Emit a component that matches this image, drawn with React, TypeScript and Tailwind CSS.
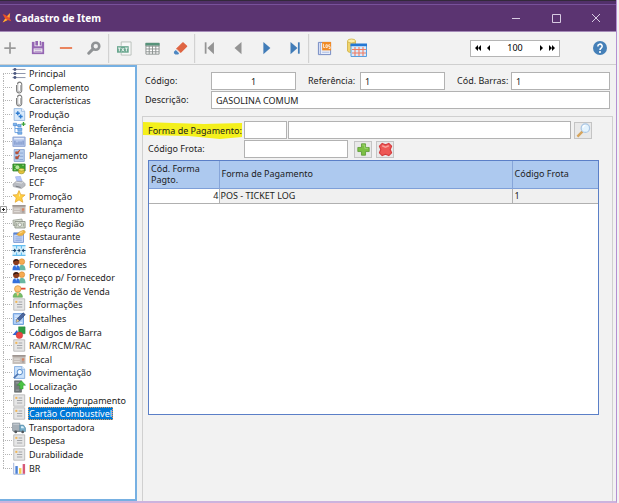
import type { ReactNode } from "react";

const Svg = ({ children, className = "h-4 w-4" }: { children: ReactNode; className?: string }) => (
  <svg viewBox="0 0 16 16" fill="none" className={className} aria-hidden="true">
    {children}
  </svg>
);

/* ---------- tree icons ---------- */

const ListIcon = (
  <Svg>
    <path d="M0 3h16M0 8h16M0 13h16" stroke="#8c93aa" strokeWidth="1.2" />
    <circle cx="3" cy="3" r="1.8" fill="#4c5880" />
    <circle cx="3" cy="8" r="1.8" fill="#4c5880" />
    <circle cx="3" cy="13" r="1.8" fill="#4c5880" />
  </Svg>
);
const ClipIcon = (
  <Svg>
    <path d="M5 5v6.5a3.2 3.2 0 0 0 6.400 0V4a2.600 2.600 0 0 0-5.200 0" stroke="#7c7c7c" strokeWidth="1.3" />
    <path d="M6.500 4v7.300a1.700 1.700 0 0 0 3.400 0V5" stroke="#a0a0a0" strokeWidth="1" />
  </Svg>
);
const ProductionIcon = (
  <Svg>
    <path d="M2 .7h9.5L15 4v11.3H2z" fill="#d9eafb" stroke="#8fb2dc" />
    <path d="M11 .7V4h4" fill="#fff" stroke="#8fb2dc" />
    <path d="M6.500 4v5M4 6.500h5M10 8v5M7.500 10.500h5" stroke="#2f7cd0" strokeWidth="1.8" />
  </Svg>
);
const ReferenceIcon = (
  <Svg>
    <path d="M3 3v10M3 8h5M3 13h5M3 4h5" stroke="#5b96dc" strokeWidth="1" />
    <path d="M1 1.500h4v3H1zM6.500 3h4v3h-4zM6.500 7.500h5v3h-5zM6.500 12h5v3h-5z" fill="#7fb5ef" stroke="#3f80ca" strokeWidth=".7" />
    <path d="M13.500 0v5M11 2.500h5" stroke="#36a136" strokeWidth="1.6" />
  </Svg>
);
const ScaleIcon = (
  <Svg>
    <path d="M.5 2.500h15v11.500H.5z" fill="#b6c8ec" stroke="#8199cb" />
    <path d="M2 4.500h12" stroke="#e6edfa" strokeWidth="1.500" />
    <path d="M3 7v5M5.500 9v3M8 8v4M10.500 8v4M13 7v5" stroke="#6f89c0" strokeWidth="1.200" />
  </Svg>
);
const PlanIcon = (
  <Svg>
    <path d="M2 .7h12.500v14.600H2z" fill="#b9cfee" stroke="#7f9bcb" />
    <path d="M8.500 5H13M8.500 9H13M8.500 13H13" stroke="#8ba7d3" strokeWidth="1.200" />
    <path d="M3.500 3h4v3.500h-4zM3.500 9h4v3.500h-4z" fill="#845c62" />
    <path d="m4 3.500 1.500 2L9 1.500M4 9.500l1.500 2 3-4" stroke="#c9502f" strokeWidth="1.400" />
  </Svg>
);
const MoneyIcon = (
  <Svg>
    <path d="M.5 2.500h15v8.500H.5z" fill="#3da22f" stroke="#2c7d24" />
    <circle cx="6" cy="6.500" r="2.400" fill="#b8e6a0" />
    <path d="M2 4h2M12 4h2M2 9.500h2" stroke="#b8e6a0" />
    <path d="M7.500 9.500v3.500c1 2 6 2 7 0V9.500c-1 1.400-6 1.400-7 0" fill="#e5c33b" stroke="#8c8a1c" strokeWidth=".7" />
    <ellipse cx="11" cy="9.500" rx="3.500" ry="1.500" fill="#f5e673" stroke="#8c8a1c" strokeWidth=".6" />
  </Svg>
);
const PrinterIcon = (
  <Svg>
    <path d="m3.500 1 6-1 3 8H6z" fill="#b4c6fa" stroke="#97a9e2" strokeWidth=".6" />
    <path d="m.5 10 4-3.500h8l3 3v2.500L11 15.500 1 13z" fill="#b9bcc2" stroke="#94979d" strokeWidth=".7" />
    <path d="m4 7.500 7 1.200L13 7" stroke="#e2e4e8" strokeWidth="1.200" />
    <path d="m4 12.500 6 1.500" stroke="#696c73" />
  </Svg>
);
const StarIcon = (
  <Svg>
    <path d="m8 .7 2.200 5 5.300.4-4.100 3.500 1.300 5.500L8 12.200l-4.700 2.900 1.300-5.500L.5 6.100l5.300-.4z" fill="#ffcf42" stroke="#e3a52d" strokeWidth=".9" />
    <path d="m8 3 1.200 3.600L8 9z" fill="#fff0b0" />
  </Svg>
);
const CardIcon = (
  <Svg>
    <path d="M0 2.500h16v11H0z" fill="#c5beb9" />
    <path d="M0 2.500h16v2H0z" fill="#9d9490" />
    <path d="M2 7.500h7M2 10.500h7" stroke="#dedad6" strokeWidth="1.400" />
    <path d="M11.500 6.500h3v3h-3z" fill="#d38364" />
    <path d="M11.500 11h3" stroke="#8e837e" />
  </Svg>
);
const NotesIcon = (
  <Svg>
    <path d="m.6 4 11-1.500 1 7-11.500 1z" fill="#dbe0d5" stroke="#959b8f" />
    <path d="M3 5.500h12.500v8H3z" fill="#d4dacd" stroke="#868c80" />
    <circle cx="9" cy="9.500" r="2.200" fill="#f5f6f2" stroke="#8a9084" strokeWidth=".8" />
    <path d="M5 7.500v4M13.500 7.500v4" stroke="#9aa094" />
  </Svg>
);
const RestaurantIcon = (
  <Svg>
    <path d="M1.500 3.500h12v11.800h-12z" fill="#c8d9f8" stroke="#6a8bcb" />
    <path d="M1.500 3.500h12v2.200h-12z" fill="#5983d2" />
    <path d="M3.500 8.500h8M3.500 11h8M3.500 13.200h8" stroke="#7c9ad6" />
    <path d="M5 5.500 9 2l5-2 2 2.500-3.500 4-4.500.5z" fill="#f0b542" stroke="#cf9330" strokeWidth=".6" />
    <path d="m8.500 4 4-2" stroke="#ffe9a6" />
  </Svg>
);
const TransferIcon = (
  <Svg>
    <path d="M0 2h16v12H0z" fill="#d3effd" />
    <path d="M0 2h16M0 14h16M5 2v3.500M11 2v3.500M5 10.500V14M11 10.500V14" stroke="#64bdf0" strokeWidth="1.400" />
    <path d="M0 8h3M13 8h3M6 8h2" stroke="#1c466f" strokeWidth="1.300" />
    <path d="m2 5.500 3 2.500-3 2.500zM14 5.500 11 8l3 2.500zM7.500 5.500l2.500 2.500-2.500 2.500z" fill="#1c466f" />
  </Svg>
);
const PeopleIcon = (
  <Svg>
    <circle cx="11.500" cy="4.500" r="3.500" fill="#f6aa50" stroke="#d0812d" strokeWidth=".7" />
    <path d="M8 15c0-5 1-6.500 3.500-6.500S16 10 16 15z" fill="#69b7a2" />
    <circle cx="4.500" cy="5" r="3.800" fill="#8c3c1c" />
    <path d="M.800 5a3.700 3.700 0 0 1 7.200-1L5 3z" fill="#2d1a14" />
    <path d="M0 15c0-4.500 1.500-6 4.500-6S9 10.500 9 15z" fill="#3470dc" />
    <path d="m3.500 9 1 3 1-3z" fill="#fff" />
  </Svg>
);
const RestrictIcon = (
  <Svg>
    <circle cx="6.500" cy="4.800" r="4" fill="#ffc577" stroke="#d6923d" strokeWidth=".9" />
    <path d="M.8 15c0-4 2-5.500 5.700-5.500s5.700 1.500 5.700 5.500z" fill="#79bf68" stroke="#559b49" strokeWidth=".7" />
    <path d="m4.500 9.500 2 4.500 2-4.500z" fill="#ffcb85" />
    <path d="M10.500 4.500H16" stroke="#e24a33" strokeWidth="2.200" />
  </Svg>
);
const FormIcon = (
  <Svg>
    <path d="M1.500 1h13.500v14H1.500z" fill="#e6e6e6" stroke="#b3b3b3" />
    <path d="M3.500 3.500h2.500v2.500H3.500z" fill="#f0b658" />
    <path d="M7.500 5H12M5.500 8H12M5.500 11H12" stroke="#a3a6aa" strokeWidth="1.300" />
  </Svg>
);
const PencilPageIcon = (
  <Svg>
    <path d="M1 2h12.500v13.300H1z" fill="#b3d1f8" stroke="#558cd4" />
    <path d="M3 5h5M3 8h3M9 13h3" stroke="#e8f2fe" strokeWidth="1.200" />
    <path d="m4.500 12.500 1-4L13 1l2.700 2.200L8.500 11z" fill="#4b67a0" stroke="#2e4470" strokeWidth=".8" />
    <path d="m4.500 12.500 1-4 3 2.500z" fill="#f3d190" />
  </Svg>
);
const ShapesIcon = (
  <Svg>
    <path d="M7.500 1h8v8.500h-8z" fill="#2f9b43" stroke="#21803a" strokeWidth=".6" />
    <path d="M0 11 5.500 5l3 6z" fill="#3566d2" />
    <circle cx="8.500" cy="11.500" r="4" fill="#ec4744" stroke="#c83433" strokeWidth=".6" />
  </Svg>
);
const SearchPageIcon = (
  <Svg>
    <path d="M2.500.7h9L15 4v11.300H2.500z" fill="#cbe2fb" stroke="#79a6dc" />
    <path d="M11.500.7V4H15" fill="#fff" stroke="#79a6dc" />
    <circle cx="9" cy="7.500" r="3.300" fill="#f3faff" stroke="#5188cb" strokeWidth="1.200" />
    <path d="m6.500 10-5 5" stroke="#4d74b0" strokeWidth="2" />
  </Svg>
);
const LocationIcon = (
  <Svg>
    <path d="M2.500 1h8.500v14H2.500z" fill="#757b7d" stroke="#575c5e" strokeWidth=".8" />
    <path d="M4 3.500h4M4 12.500h4" stroke="#a5adaf" />
    <path d="M11 1 16 6.500h-3V11H9V6.500H6z" fill="#4cc345" stroke="#28962a" strokeWidth=".6" />
  </Svg>
);
const TruckIcon = (
  <Svg>
    <path d="M0 2.500h9v9.500H0z" fill="#a7b0b8" stroke="#87919a" strokeWidth=".8" />
    <path d="M1 4h7" stroke="#d0d7dc" />
    <path d="M9 5h4.500L16 8.500V13H9z" fill="#74acc9" stroke="#4f84a1" strokeWidth=".7" />
    <path d="M10.500 6.500H13l1.500 2.500h-4z" fill="#dcf1fb" />
    <path d="M1 12h9v1.500H1z" fill="#747d85" />
    <circle cx="4" cy="13.500" r="1.700" fill="#50565b" />
    <circle cx="12.500" cy="13.500" r="1.700" fill="#50565b" />
  </Svg>
);
const ChartIcon = (
  <Svg>
    <path d="M1.500 1v14h14" stroke="#8da4d0" strokeWidth="1" />
    <path d="M3.500 5h3v9.500h-3z" fill="#4d82d6" />
    <path d="M8 7.500h3v7H8z" fill="#f4cf51" />
    <path d="M12.500 2.500h3v12h-3z" fill="#d65a78" />
  </Svg>
);

type TreeNode = { label: string; icon: ReactNode; expandable?: boolean; selected?: boolean };

const TREE: TreeNode[] = [
  { label: "Principal", icon: ListIcon },
  { label: "Complemento", icon: ClipIcon },
  { label: "Características", icon: ClipIcon },
  { label: "Produção", icon: ProductionIcon },
  { label: "Referência", icon: ReferenceIcon },
  { label: "Balança", icon: ScaleIcon },
  { label: "Planejamento", icon: PlanIcon },
  { label: "Preços", icon: MoneyIcon },
  { label: "ECF", icon: PrinterIcon },
  { label: "Promoção", icon: StarIcon },
  { label: "Faturamento", icon: CardIcon, expandable: true },
  { label: "Preço Região", icon: NotesIcon },
  { label: "Restaurante", icon: RestaurantIcon },
  { label: "Transferência", icon: TransferIcon },
  { label: "Fornecedores", icon: PeopleIcon },
  { label: "Preço p/ Fornecedor", icon: PeopleIcon },
  { label: "Restrição de Venda", icon: RestrictIcon },
  { label: "Informações", icon: FormIcon },
  { label: "Detalhes", icon: PencilPageIcon },
  { label: "Códigos de Barra", icon: ShapesIcon },
  { label: "RAM/RCM/RAC", icon: FormIcon },
  { label: "Fiscal", icon: CardIcon },
  { label: "Movimentação", icon: SearchPageIcon },
  { label: "Localização", icon: LocationIcon },
  { label: "Unidade Agrupamento", icon: FormIcon },
  { label: "Cartão Combustível", icon: FormIcon, selected: true },
  { label: "Transportadora", icon: TruckIcon },
  { label: "Despesa", icon: FormIcon },
  { label: "Durabilidade", icon: FormIcon },
  { label: "BR", icon: ChartIcon },
];

function TitleBar() {
  return (
    <header className="border-t border-[#332a3b] bg-[#52306a] pt-[3px]">
      <div className="flex h-[28px] items-center border-t border-b border-t-[#78519a] border-b-[#a58bb8] bg-[#5b3471]">
        <svg viewBox="0 0 16 16" className="ml-[2px] h-[10px] w-[10px]" aria-hidden="true">
          <path d="M1 2c4 0 5 2 7 3l5-5-1 8 3 5-6-2-8 4 4-6z" fill="#e8502a" />
          <path d="m8 5 5-5-1 8z" fill="#f9a33a" />
          <path d="m1 15 4-6 4 2z" fill="#ffb733" />
        </svg>
        <h1 className="ml-[3px] flex-1 text-[10px] font-bold text-white">Cadastro de Item</h1>
        <div className="flex text-[#d8cbe2]">
          <button aria-label="Minimizar" className="flex w-10 justify-center">
            <svg viewBox="0 0 10 10" className="h-[10px] w-[10px]" stroke="currentColor"><path d="M1 5.500h8" /></svg>
          </button>
          <button aria-label="Maximizar" className="flex w-10 justify-center">
            <svg viewBox="0 0 10 10" className="h-[10px] w-[10px]" fill="none" stroke="currentColor"><path d="M1.500 1.500h8v8h-8z" /></svg>
          </button>
          <button aria-label="Fechar" className="flex w-10 justify-center">
            <svg viewBox="0 0 10 10" className="h-[10px] w-[10px]" stroke="currentColor"><path d="m1 1 8 8M9 1 1 9" /></svg>
          </button>
        </div>
      </div>
    </header>
  );
}

function ToolButton({ label, children, wide }: { label: string; children: ReactNode; wide?: boolean }) {
  return (
    <button aria-label={label} className={`flex h-5 items-center justify-center ${wide ? "w-[30px]" : "w-5"}`}>
      {children}
    </button>
  );
}

const Separator = () => <span className="mx-1 h-[29px] w-[2px] border-l border-[#d2d2d2] bg-[#ececec]" />;

function Toolbar() {
  return (
    <div className="flex h-[33px] items-center border-b border-[#cfcfcf] bg-[#f2f2f2] pr-[6px]">
      <div className="flex gap-2">
        <ToolButton label="Novo">
          <Svg className="h-[14px] w-[14px]"><path d="M8 1.500v13M1.500 8h13" stroke="#9a9a9a" strokeWidth="2" /></Svg>
        </ToolButton>
        <ToolButton label="Salvar">
          <Svg className="h-[14px] w-[14px]">
            <path d="M1 1h14v14H1z" fill="#9566b3" />
            <path d="M4 0h8v6H4z" fill="#f2f2f2" />
            <path d="M5 0h3v5H5zM10 0h1.500v5H10z" fill="#9566b3" />
            <path d="M3 8.500h10V13H3z" fill="#f2f2f2" />
            <path d="M4 10h8M4 12h8" stroke="#b796cc" />
          </Svg>
        </ToolButton>
        <ToolButton label="Excluir">
          <Svg className="h-[14px] w-[14px]"><path d="M1 8h14" stroke="#e8754a" strokeWidth="2" /></Svg>
        </ToolButton>
        <ToolButton label="Pesquisar">
          <Svg className="h-[14px] w-[14px]">
            <circle cx="10" cy="6" r="4" stroke="#909395" strokeWidth="3" />
            <path d="m7 9-5 5" stroke="#909395" strokeWidth="3.400" strokeLinecap="round" />
          </Svg>
        </ToolButton>
      </div>
      <Separator />
      <div className="flex gap-2">
        <ToolButton label="Exportar TXT">
          <Svg className="h-[15px] w-[15px]">
            <path d="M4.500 5V1H15v14H4.500v-2" fill="#f8f8f8" stroke="#b7bfba" />
            <path d="M0 5.500h12.500v7H0z" fill="#6aa78f" />
            <path d="M1 7.500h3M2.500 7.500V11M5 7.500 7.500 11M7.500 7.500 5 11M8.500 7.500h3M10 7.500V11" stroke="#fff" strokeWidth=".9" />
          </Svg>
        </ToolButton>
        <ToolButton label="Tabela">
          <Svg className="h-[15px] w-[15px]">
            <path d="M1 2.500h14v11.500H1z" fill="#fff" stroke="#8b918f" />
            <path d="M.5 2h15v3H.5z" fill="#56937a" />
            <path d="M1 5.500h14M1 8.500h14M1 11.500h14M4.500 5v9M8 5v9M11.500 5v9" stroke="#8b918f" />
          </Svg>
        </ToolButton>
        <ToolButton label="Limpar">
          <Svg className="h-[15px] w-[15px]">
            <path d="m10.500 2 4 3.500-6.500 6.500L4 8.500z" fill="#df6543" stroke="#df6543" strokeLinejoin="round" strokeWidth="1.500" />
            <path d="m3 9.500 3.500 3.500L5.500 14.500h-3L1 13v-1.500z" fill="#4d87c2" />
            <path d="m3.500 8.500 4 4" stroke="#f2f2f2" />
          </Svg>
        </ToolButton>
      </div>
      <Separator />
      <div className="flex gap-2">
        <ToolButton label="Primeiro">
          <Svg className="h-[14px] w-[14px]"><path d="M3 1.500v13" stroke="#949494" strokeWidth="2" /><path d="M12.500 1v14L5 8z" fill="#949494" /></Svg>
        </ToolButton>
        <ToolButton label="Anterior">
          <Svg className="h-[14px] w-[14px]"><path d="M12 1v14L4 8z" fill="#949494" /></Svg>
        </ToolButton>
        <ToolButton label="Próximo">
          <Svg className="h-[14px] w-[14px]"><path d="M5 1v14l8-7z" fill="#417cb8" /></Svg>
        </ToolButton>
        <ToolButton label="Último">
          <Svg className="h-[14px] w-[14px]"><path d="M13.500 1.500v13" stroke="#417cb8" strokeWidth="2" /><path d="M4 1v14l8-7z" fill="#417cb8" /></Svg>
        </ToolButton>
      </div>
      <Separator />
      <div className="flex gap-2">
        <ToolButton label="Log">
          <Svg className="h-[15px] w-[15px]">
            <path d="M1.500 1.500h13v13h-13z" fill="#e9eefb" stroke="#6f86c0" />
            <path d="M3.500 1v14" stroke="#8ba0d3" />
            <path d="M5.500 1H15v9H5.500z" fill="#f08a25" />
            <path d="M7 3v4h1.500M9.500 4H11v3H9.500zM14 4h-1.500v2H14v2h-1.500" stroke="#fff" strokeWidth=".8" />
            <path d="M5.500 12H13" stroke="#9caeda" strokeWidth=".8" />
          </Svg>
        </ToolButton>
        <ToolButton label="Agenda" wide>
          <svg viewBox="0 0 20 20" className="h-5 w-5" fill="none" aria-hidden="true">
            <path d="M.5 3v10c1 2 7 2 8 0V3" fill="#f0d46c" stroke="#cfae3f" strokeWidth=".8" />
            <ellipse cx="4.500" cy="3" rx="4" ry="2" fill="#faedaa" stroke="#cfae3f" strokeWidth=".8" />
            <path d="M4 6.500h15.500v12H4z" fill="#d9ebfc" stroke="#5a9fdf" />
            <path d="M3.500 5.500H20v2.700H3.500z" fill="#2478d4" />
            <path d="M5 11.500h14M5 15h14M8 9v9M12 9v9M16 9v9" stroke="#f07b61" strokeWidth="1.100" />
          </svg>
        </ToolButton>
      </div>
      <div className="ml-auto flex items-center gap-[30px]">
        <div className="flex h-[17px] w-[90px] items-center border border-[#b5b5b5] bg-white px-1 text-black">
          <button aria-label="Recuar tudo"><svg viewBox="0 0 6 6" className="h-[6px] w-[6px]"><path d="M3 0v6L0 3zM6 0v6L3 3z" /></svg></button>
          <button aria-label="Recuar" className="ml-1"><svg viewBox="0 0 6 6" className="h-[6px] w-[6px]"><path d="M5 0v6L2 3z" /></svg></button>
          <input aria-label="Quantidade" defaultValue="100" className="w-0 min-w-0 flex-1 bg-transparent text-center outline-none" />
          <button aria-label="Avançar"><svg viewBox="0 0 6 6" className="h-[6px] w-[6px]"><path d="M1 0v6l3-3z" /></svg></button>
          <button aria-label="Avançar tudo" className="ml-1"><svg viewBox="0 0 6 6" className="h-[6px] w-[6px]"><path d="M0 0v6l3-3zM3 0v6l3-3z" /></svg></button>
        </div>
        <button aria-label="Ajuda" className="flex w-5 justify-center">
          <Svg className="h-[14px] w-[14px]">
            <circle cx="8" cy="8" r="8" fill="#4580b8" />
            <path d="M5.500 6.200a2.500 2.500 0 1 1 3.700 2.100C8.300 8.800 8 9.200 8 10.200" stroke="#fff" strokeWidth="1.800" />
            <circle cx="8" cy="12.500" r="1.200" fill="#fff" />
          </Svg>
        </button>
      </div>
    </div>
  );
}

function Sidebar() {
  return (
    <nav className="flex w-[137px] shrink-0 flex-col border-2 border-l-0 border-[#76b0e2] bg-white pb-6">
      <ul className="flex flex-1 flex-col">
        {TREE.map((node, i) => (
          <li key={node.label} className="flex flex-1 items-center">
            <span className="relative flex w-3 shrink-0 items-center self-stretch">
              <span
                className={`absolute left-[3px] border-l border-dotted border-[#b4b4b4] ${i === 0 ? "top-1/2" : "top-0"} ${
                  i === TREE.length - 1 ? "bottom-1/2" : "bottom-0"
                }`}
              />
              <span className="ml-[3px] flex-1 border-t border-dotted border-[#b4b4b4]" />
              {node.expandable && (
                <svg viewBox="0 0 7 7" className="absolute left-0 h-[7px] w-[7px]">
                  <path d="M.5.5h6v6h-6z" fill="#fff" stroke="#999" />
                  <path d="M2 3.500h3M3.500 2v3" stroke="#222" />
                </svg>
              )}
            </span>
            <button className="flex items-center gap-[2px] whitespace-nowrap">
              <span className="h-[13px] w-[14px] [&>svg]:h-[13px] [&>svg]:w-[14px]">{node.icon}</span>
              <span
                className={
                  node.selected
                    ? "bg-[#0078d7] px-px leading-[13px] text-white outline-1 -outline-offset-1 outline-dotted outline-[#e59a4e]"
                    : "px-px leading-[13px]"
                }
              >
                {node.label}
              </span>
            </button>
          </li>
        ))}
      </ul>
    </nav>
  );
}

const FIELD = "h-[18px] min-w-0 border border-[#b2b2b2] bg-white px-1 outline-none";
const ICON_BUTTON = "flex h-[17px] w-[18px] shrink-0 items-center justify-center border border-[#c4c4c4] bg-[#e9e9e9]";

function ItemForm() {
  return (
    <div className="flex flex-col gap-px px-[3px]">
      <div className="flex items-center">
        <label htmlFor="codigo" className="w-[66px]">Código:</label>
        <input id="codigo" defaultValue="1" className={`${FIELD} w-[85px] text-center`} />
        <label htmlFor="referencia" className="ml-3 w-[52px]">Referência:</label>
        <input id="referencia" defaultValue="1" className={`${FIELD} flex-1`} />
        <label htmlFor="barras" className="ml-3 w-[54px] whitespace-nowrap">Cód. Barras:</label>
        <input id="barras" defaultValue="1" className={`${FIELD} w-[99px]`} />
      </div>
      <div className="flex items-center">
        <label htmlFor="descricao" className="w-[66px]">Descrição:</label>
        <input id="descricao" defaultValue="GASOLINA COMUM" className={`${FIELD} flex-1`} />
      </div>
    </div>
  );
}

function PaymentPanel() {
  return (
    <section className="flex flex-1 flex-col border border-b-0 border-[#d0d0d0] pt-1">
      <div className="flex items-center pr-5">
        <label htmlFor="forma" className="relative w-[101px] pl-[5px] whitespace-nowrap">
          <svg viewBox="0 0 98 17" preserveAspectRatio="none" className="absolute top-0 left-0 h-full w-[99px]" aria-hidden="true">
            <path d="M0 0 30 1 60 2 98 1v14l-22 2-31-3-45-1z" fill="#f4f01c" />
          </svg>
          <span className="relative leading-[17px]">Forma de Pagamento:</span>
        </label>
        <input id="forma" className={`${FIELD} w-[43px]`} />
        <input aria-label="Descrição da forma de pagamento" className={`${FIELD} ml-px flex-1`} />
        <button aria-label="Localizar forma" className={`${ICON_BUTTON} ml-[3px]`}>
          <Svg className="h-[15px] w-[15px]">
            <path d="m7 9-5.500 5.500" stroke="#d5a45c" strokeWidth="2.600" />
            <circle cx="10" cy="5.500" r="4.500" fill="#e3f3fe" stroke="#a9c6e4" strokeWidth="1.300" />
            <path d="M7.500 5A2.500 2.500 0 0 1 10 2.500" stroke="#fff" strokeWidth="1.300" />
          </Svg>
        </button>
      </div>
      <div className="mt-px flex items-center">
        <label htmlFor="frota" className="w-[101px] pl-[5px]">Código Frota:</label>
        <input id="frota" className={`${FIELD} w-[104px]`} />
        <button aria-label="Adicionar" className={`${ICON_BUTTON} ml-[6px]`}>
          <Svg className="h-[13px] w-[13px]">
            <path d="M5.500 1h5v4.500H15v5h-4.500V15h-5v-4.500H1v-5h4.500z" fill="#7cc043" stroke="#5d9a35" strokeLinejoin="round" />
            <path d="M6.500 2.500h3v4h4" stroke="#a4d977" />
          </Svg>
        </button>
        <button aria-label="Remover" className={`${ICON_BUTTON} ml-1`}>
          <Svg className="h-[15px] w-[15px]">
            <path d="M4.500 1.500 8 3l3.500-1.500L14.500 4.500 13 8l1.500 3.500-3 3L8 13l-3.500 1.500-3-3L3 8 1.500 4.500z" fill="#ee5855" stroke="#d43a3c" strokeWidth="1.200" strokeLinejoin="round" />
            <path d="M4.500 4 8 5.500 11.500 4" stroke="#f8a09b" strokeWidth="1.500" />
          </Svg>
        </button>
      </div>
      <div className="mt-[2px] mr-[13px] mb-[86px] ml-[5px] flex-1 border border-[#5b7fc7] bg-white">
        <table className="w-full table-fixed border-collapse text-left">
          <thead>
            <tr className="h-[27px] border-b border-[#7e9fd8] bg-[#adc9ef]">
              <th className="w-[70px] border-r border-[#86a5d9] px-[2px] leading-[11px] font-normal">Cód. Forma Pagto.</th>
              <th className="border-r border-[#86a5d9] px-[2px] font-normal">Forma de Pagamento</th>
              <th className="w-[86px] px-[2px] font-normal">Código Frota</th>
            </tr>
          </thead>
          <tbody>
            <tr className="h-[15px] border-b border-[#b0b0b0] bg-[#f0f0f0] leading-[14px]">
              <td className="border-r border-[#b0b0b0] bg-white text-right">4</td>
              <td className="border-r border-[#b0b0b0] px-px">POS - TICKET LOG</td>
              <td className="px-[2px]">1</td>
            </tr>
          </tbody>
        </table>
      </div>
    </section>
  );
}

export default function App() {
  return (
    <div className="flex min-h-screen flex-col bg-[#f2f2f2] font-['Noto_Sans',sans-serif] text-[9px] leading-3 text-[#1c1c1c]">
      <div className="mr-[2px] flex flex-1 flex-col border-r border-b-2 border-r-[#b490d2] border-b-[#cdb3de]">
        <TitleBar />
        <Toolbar />
        <div className="flex flex-1">
          <Sidebar />
          <main className="flex min-w-0 flex-1 flex-col gap-[7px] pt-[7px] pr-[3px] pl-[5px]">
            <ItemForm />
            <PaymentPanel />
          </main>
        </div>
      </div>
    </div>
  );
}
